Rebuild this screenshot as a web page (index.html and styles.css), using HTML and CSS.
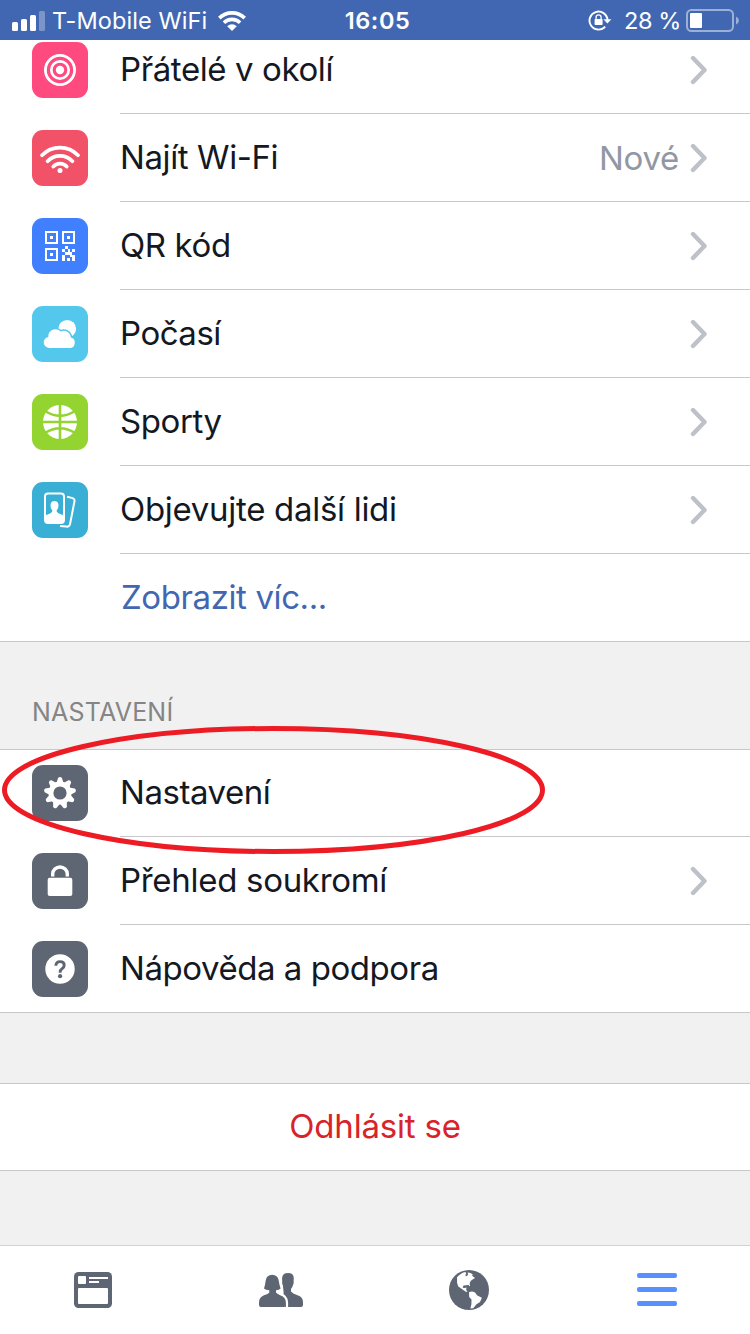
FILE: index.html
```html
<!DOCTYPE html>
<html lang="cs">
<head>
<meta charset="utf-8">
<title>Nastavení</title>
<link rel="stylesheet" href="styles.css">
</head>
<body>
<div class="screen">
  <header class="status">
    <div class="status-left">
      <svg class="signal" width="33" height="20" viewBox="0 0 33 20"><g fill="#fff"><rect y="11" width="6" height="9" rx="1.5"/><rect x="9" y="8" width="6" height="12" rx="1.5"/><rect x="18" y="4" width="6" height="16" rx="1.5"/><rect x="27" width="6" height="20" rx="1.5" opacity=".3"/></g></svg>
      <span class="carrier">T-Mobile WiFi</span>
      <svg class="wifi" width="28" height="20" viewBox="0 0 28 20"><g fill="none" stroke="#fff" stroke-width="3.6"><path d="M1.3 7.1A18 18 0 0 1 26.7 7.1"/><path d="M5.9 11.7A11.5 11.5 0 0 1 22.1 11.7"/></g><path d="M9.2 15.2A6.8 6.8 0 0 1 18.8 15.2L14 20Z" fill="#fff"/></svg>
    </div>
    <div class="clock">16:05</div>
    <div class="status-right">
      <svg class="rotlock" width="24" height="22" viewBox="0 0 24 22"><path d="M17.2 17.6A9 9 0 1 1 19.5 11" fill="none" stroke="#fff" stroke-width="1.9"/><path d="M15.4 10.3H23.4L19.4 14.6Z" fill="#fff"/><rect x="6.6" y="10" width="8" height="6" rx=".8" fill="#fff"/><path d="M8.1 10.5V8.3a2.5 2.5 0 0 1 5 0V10.5" fill="none" stroke="#fff" stroke-width="1.3"/></svg>
      <span class="percent">28 %</span>
      <svg class="battery" width="53" height="23" viewBox="0 0 53 23"><rect x="1" y="1" width="46" height="21" rx="4.5" fill="none" stroke="#fff" stroke-width="2" opacity=".48"/><rect x="4" y="4" width="12" height="15" rx="1" fill="#fff"/><path d="M50 7.5Q53 9 53 11.5T50 15.5Z" fill="#fff" opacity=".48"/></svg>
    </div>
  </header>

  <main class="content">
    <ul class="list list-top">
      <li class="row">
        <svg class="icon pink" viewBox="0 0 56 56"><g fill="none" stroke="#fff"><circle cx="28" cy="28" r="14.6" stroke-width="2.8"/><circle cx="28" cy="28" r="8.7" stroke-width="2.7"/></g><circle cx="28" cy="28" r="4.2" fill="#fff"/></svg>
        <div class="cell"><span class="label t-nearby">Přátelé v okolí</span><svg class="chev" viewBox="0 0 18 30"><path d="M3 3L14.5 15L3 27"/></svg></div>
      </li>
      <li class="row">
        <svg class="icon red" viewBox="0 0 56 56"><g fill="none" stroke="#fff" stroke-width="3.8" stroke-linecap="round"><path d="M10 25.2A25 25 0 0 1 46 25.2"/><path d="M15.6 31.2A17 17 0 0 1 40.4 31.2"/><path d="M21.3 36.6A9 9 0 0 1 34.7 36.6"/></g><circle cx="28" cy="40.4" r="2.5" fill="#fff"/></svg>
        <div class="cell"><span class="label t-wifi">Najít Wi-Fi</span><span class="note">Nové</span><svg class="chev" viewBox="0 0 18 30"><path d="M3 3L14.5 15L3 27"/></svg></div>
      </li>
      <li class="row">
        <svg class="icon blue" viewBox="0 0 56 56"><g fill="none" stroke="#fff" stroke-width="2"><rect x="14" y="14" width="11" height="11"/><rect x="31" y="14" width="11" height="11"/><rect x="14" y="31" width="11" height="11"/></g><g fill="#fff"><rect x="18" y="18" width="3" height="3"/><rect x="35" y="18" width="3" height="3"/><rect x="18" y="35" width="3" height="3"/><path d="M33 28h3v3h-3zM30 31h3v3h-3zM36 31h2v3h-2zM40 31h3v3h-3zM33 34h7v3h-7zM30 37h3v6h-3zM35 40h3v3h-3zM38 37h5v2h-5zM40 37h3v6h-3z"/></g></svg>
        <div class="cell"><span class="label t-qr">QR kód</span><svg class="chev" viewBox="0 0 18 30"><path d="M3 3L14.5 15L3 27"/></svg></div>
      </li>
      <li class="row">
        <svg class="icon sky" viewBox="0 0 56 56"><circle cx="35.2" cy="22.8" r="8.9" fill="#fff"/><path d="M17.5 42a5.6 5.6 0 0 1-1.2-11.1A7.2 7.2 0 0 1 28.7 25.5A7 7 0 0 1 38.8 31.4A5.4 5.4 0 0 1 37 42Z" fill="#fff" stroke="#54c7ec" stroke-width="3" paint-order="stroke"/></svg>
        <div class="cell"><span class="label t-weather">Počasí</span><svg class="chev" viewBox="0 0 18 30"><path d="M3 3L14.5 15L3 27"/></svg></div>
      </li>
      <li class="row">
        <svg class="icon green" viewBox="0 0 56 56"><circle cx="28" cy="28" r="17" fill="#fff"/><g fill="none" stroke="#94d431" stroke-width="2.6"><path d="M28 10V46M10 28H46M13 17Q28 26.5 43 17M13 39Q28 29.5 43 39"/></g></svg>
        <div class="cell"><span class="label t-sport">Sporty</span><svg class="chev" viewBox="0 0 18 30"><path d="M3 3L14.5 15L3 27"/></svg></div>
      </li>
      <li class="row">
        <svg class="icon teal" viewBox="0 0 56 56"><path d="M35 14.7L39.8 15.9Q43.2 16.7 42.4 19.8L38 42.3Q37.3 45 34.3 44.6L28 43.9" fill="none" stroke="#fff" stroke-width="2"/><rect x="13" y="11.5" width="19" height="29.5" rx="3" fill="none" stroke="#fff" stroke-width="2"/><path d="M13 33.5Q20.8 31 20.4 28.5Q18.3 26.5 18.5 23Q18.8 19 22.5 19Q26.2 19 26.5 23Q26.7 26.5 24.6 28.5Q24.2 31 32 33.5V38.5Q32 41 29.5 41H15.5Q13 41 13 38.5Z" fill="#fff"/></svg>
        <div class="cell"><span class="label t-discover">Objevujte další lidi</span><svg class="chev" viewBox="0 0 18 30"><path d="M3 3L14.5 15L3 27"/></svg></div>
      </li>
      <li class="row row-last"><div class="cell"><span class="label more">Zobrazit víc...</span></div></li>
    </ul>

    <h2 class="section-title"><span>NASTAVENÍ</span></h2>

    <ul class="list list-settings">
      <li class="row">
        <svg class="icon slate" viewBox="0 0 56 56"><defs><path id="tooth" d="M24.2 18.5L26.2 12.8Q28 11 29.8 12.8L31.8 18.5Z"/></defs><g fill="#fff"><circle cx="28" cy="28" r="11.5"/><use href="#tooth"/><use href="#tooth" transform="rotate(40 28 28)"/><use href="#tooth" transform="rotate(80 28 28)"/><use href="#tooth" transform="rotate(120 28 28)"/><use href="#tooth" transform="rotate(160 28 28)"/><use href="#tooth" transform="rotate(200 28 28)"/><use href="#tooth" transform="rotate(240 28 28)"/><use href="#tooth" transform="rotate(280 28 28)"/><use href="#tooth" transform="rotate(320 28 28)"/></g><circle cx="28" cy="28" r="6.6" fill="#5f6673"/></svg>
        <div class="cell"><span class="label t-settings">Nastavení</span></div>
        <svg class="ring" width="546" height="130" viewBox="0 0 546 130"><ellipse cx="273.5" cy="65" rx="269" ry="61.5"/></svg>
      </li>
      <li class="row">
        <svg class="icon slate" viewBox="0 0 56 56"><rect x="15.7" y="24.8" width="24.6" height="18.2" rx="2" fill="#fff"/><path d="M20.7 23.6V21a7.3 7 0 0 1 14.6 0V23.6" fill="none" stroke="#fff" stroke-width="3.4"/></svg>
        <div class="cell"><span class="label t-privacy">Přehled soukromí</span><svg class="chev" viewBox="0 0 18 30"><path d="M3 3L14.5 15L3 27"/></svg></div>
      </li>
      <li class="row row-last">
        <svg class="icon slate" viewBox="0 0 56 56"><circle cx="28" cy="28" r="14.7" fill="#fff"/><path d="M23.9 24.8Q23.9 20.6 28.1 20.6Q32.2 20.6 32.2 24.2Q32.2 26.3 30 27.8Q28.1 29 28.1 31.8" fill="none" stroke="#5f6673" stroke-width="2.9"/><circle cx="28.1" cy="35.2" r="2.1" fill="#5f6673"/></svg>
        <div class="cell"><span class="label t-help">Nápověda a podpora</span></div>
      </li>
    </ul>

    <div class="logout"><span>Odhlásit se</span></div>
  </main>

  <nav class="tabs">
    <div class="tab tab-feed"><svg width="38" height="36" viewBox="0 0 38 36"><rect width="38" height="36" rx="4.5" fill="#5f6673"/><g fill="#fff"><rect x="4" y="4" width="8" height="8" rx="1"/><rect x="15" y="5" width="19" height="2"/><rect x="15" y="9" width="10" height="2"/><rect x="4" y="16" width="30" height="16" rx="1"/></g></svg></div>
    <div class="tab"><svg width="44" height="36" viewBox="0 0 44 36"><g fill="#5f6673"><path d="M23.2 5.8Q23.4 1 29 1Q34.8 1 34.8 6.2L34.6 9.4Q35 11.5 34 13Q33.4 15.6 32 17V19.6Q33.5 21.6 38.5 23.2Q44 25 44 30V33Q44 35 42 35H26Z"/><path d="M23.2 5.8L23.4 9.4Q22.8 11.5 23.8 13Q24.3 15.5 25.8 17V19.4Q25.6 21.4 22.6 22.9L28 35H32V5Z"/><path d="M13.2 2.8Q18.6 3 19.6 8Q20.4 13 21.6 16.6Q20.2 18.2 17 18.2V20.4Q18 22 21.8 23.2Q26.8 25 26.8 30V33.2Q26.8 35 25 35H2Q0 35 0 33V30.4Q0 25.2 5 23.3Q9.3 22 10.3 20.4V18.2Q6.4 18.2 5 16.6Q6.2 13 6.7 8.6Q7.6 3 13.2 2.8Z"/></g><path d="M20.5 21.6Q28 24 28 30.5V36" fill="none" stroke="#fff" stroke-width="2.2"/></svg></div>
    <div class="tab"><svg width="40" height="40" viewBox="0 0 40 40"><circle cx="20" cy="20" r="20" fill="#5f6673"/><g fill="#fff"><path d="M8 7.3Q12 2.8 16.6 2.1L17.3 4.2L15.8 4.9L17.6 6.3L19 4.8L18.7 2.4Q22.5 2.4 24 5L22.8 5.5L26 8.1L24 9.3Q21.4 10.6 20.7 13.1L21 16.4L19.5 15L14.5 15.4L13.6 17.7L15.7 18L17.5 17.5L17.2 20L18.6 21.8L16.8 21.8L13.6 19.5L9.3 16.4L8.1 13Z"/><path d="M20 22.3Q22.8 20.6 26 22.5L28.3 25.6L32.9 27.7L31 32L27.5 34.2L24.2 38.2L21.4 38.4L22.4 34.3L22.5 29.6L20.2 27Z"/></g></svg></div>
    <div class="tab tab-menu"><svg width="40" height="34" viewBox="0 0 40 34"><g fill="#5890ff"><rect width="40" height="5" rx="2"/><rect y="14" width="40" height="5" rx="2"/><rect y="28" width="40" height="5" rx="2"/></g></svg></div>
  </nav>
</div>
</body>
</html>
```
FILE: styles.css
```css
* { box-sizing: border-box; }
body { margin: 0; background: #f1f1f1; }
.screen {
  width: 750px; height: 1334px; overflow: hidden;
  display: flex; flex-direction: column;
  font-family: Inter, "Liberation Sans", sans-serif;
  color: #141823; background: #f1f1f1;
}
.status {
  position: relative; z-index: 1; flex: none; height: 40px;
  display: grid; grid-template-columns: 1fr auto 1fr; align-items: center;
  padding: 0 11px 0 12px; background: #4267b2; color: #fff;
  font-size: 23.5px; line-height: 40px; white-space: nowrap;
}
.status-left, .status-right { display: flex; align-items: center; }
.status-right { justify-content: flex-end; }
.carrier { margin-left: 7px; letter-spacing: .1px; padding-top: 1px; }
.wifi { margin-left: 11px; }
.clock { font-weight: 600; letter-spacing: .6px; padding: 1px 0 0 4px; }
.rotlock { margin-top: -1px; }
.percent { margin: 0 5px 0 12px; padding-top: 1px; letter-spacing: -.4px; }

.content { flex: 1; min-height: 0; overflow: hidden; }
.list { list-style: none; margin: 0; padding: 0; background: #fff; }
.list-top { margin-top: -14px; }
.row {
  position: relative; height: 88px; padding-left: 32px;
  display: grid; grid-template-columns: 56px 1fr; column-gap: 32px;
}
.icon { width: 56px; height: 56px; margin-top: 16px; border-radius: 11px; }
.cell {
  grid-column: 2; height: 88px; padding-right: 42px;
  display: flex; align-items: center; border-bottom: 1px solid #c8c7cc;
}
.row-last { border-bottom: 1px solid #c8c7cc; }
.row-last .cell { height: 87px; border-bottom: 0; }
.label { flex: 1; padding-bottom: 2px; font-size: 33px; line-height: 40px; letter-spacing: -.4px; white-space: nowrap; }
.t-weather { letter-spacing: -.5px; }
.t-discover, .t-privacy { letter-spacing: -.3px; }
.t-settings, .t-help { letter-spacing: -.45px; }
.note { font-size: 33px; color: #9197a3; margin-right: 11px; letter-spacing: -.3px; }
.chev { width: 18px; height: 30px; fill: none; stroke: #bdc1c9; stroke-width: 4.4; stroke-linecap: round; stroke-linejoin: round; }
.more { color: #4267b2; padding-left: 1px; }

.pink { background: #ff4a80; }
.red { background: #f25268; }
.blue { background: #4080ff; }
.sky { background: #54c7ec; }
.green { background: #94d431; }
.teal { background: #39afd5; }
.slate { background: #5f6673; }

.section-title {
  margin: 0; height: 107px; padding: 0 0 21px 32px;
  display: flex; align-items: flex-end;
  font-size: 25px; font-weight: 400; line-height: 32px; letter-spacing: .2px; color: #858585;
}
.list-settings { box-shadow: inset 0 1px #c8c7cc; }
.ring {
  position: absolute; left: 0; top: -24px; z-index: 2;
  fill: none; stroke: #ed1c24; stroke-width: 5;
}
.logout {
  margin-top: 70px; height: 88px; padding-bottom: 2px; background: #fff; color: #d8232a;
  border-top: 1px solid #c8c7cc; border-bottom: 1px solid #c8c7cc;
  display: flex; align-items: center; justify-content: center;
  font-size: 33px; letter-spacing: -.2px;
}
.tabs {
  flex: none; height: 89px; background: #fff; border-top: 1px solid #d2d2d4;
  display: grid; grid-template-columns: repeat(4, 1fr);
}
.tab { display: flex; align-items: center; justify-content: center; }
.tab-feed { padding-right: 2px; }
.tab-menu { padding-left: 2px; }
```
